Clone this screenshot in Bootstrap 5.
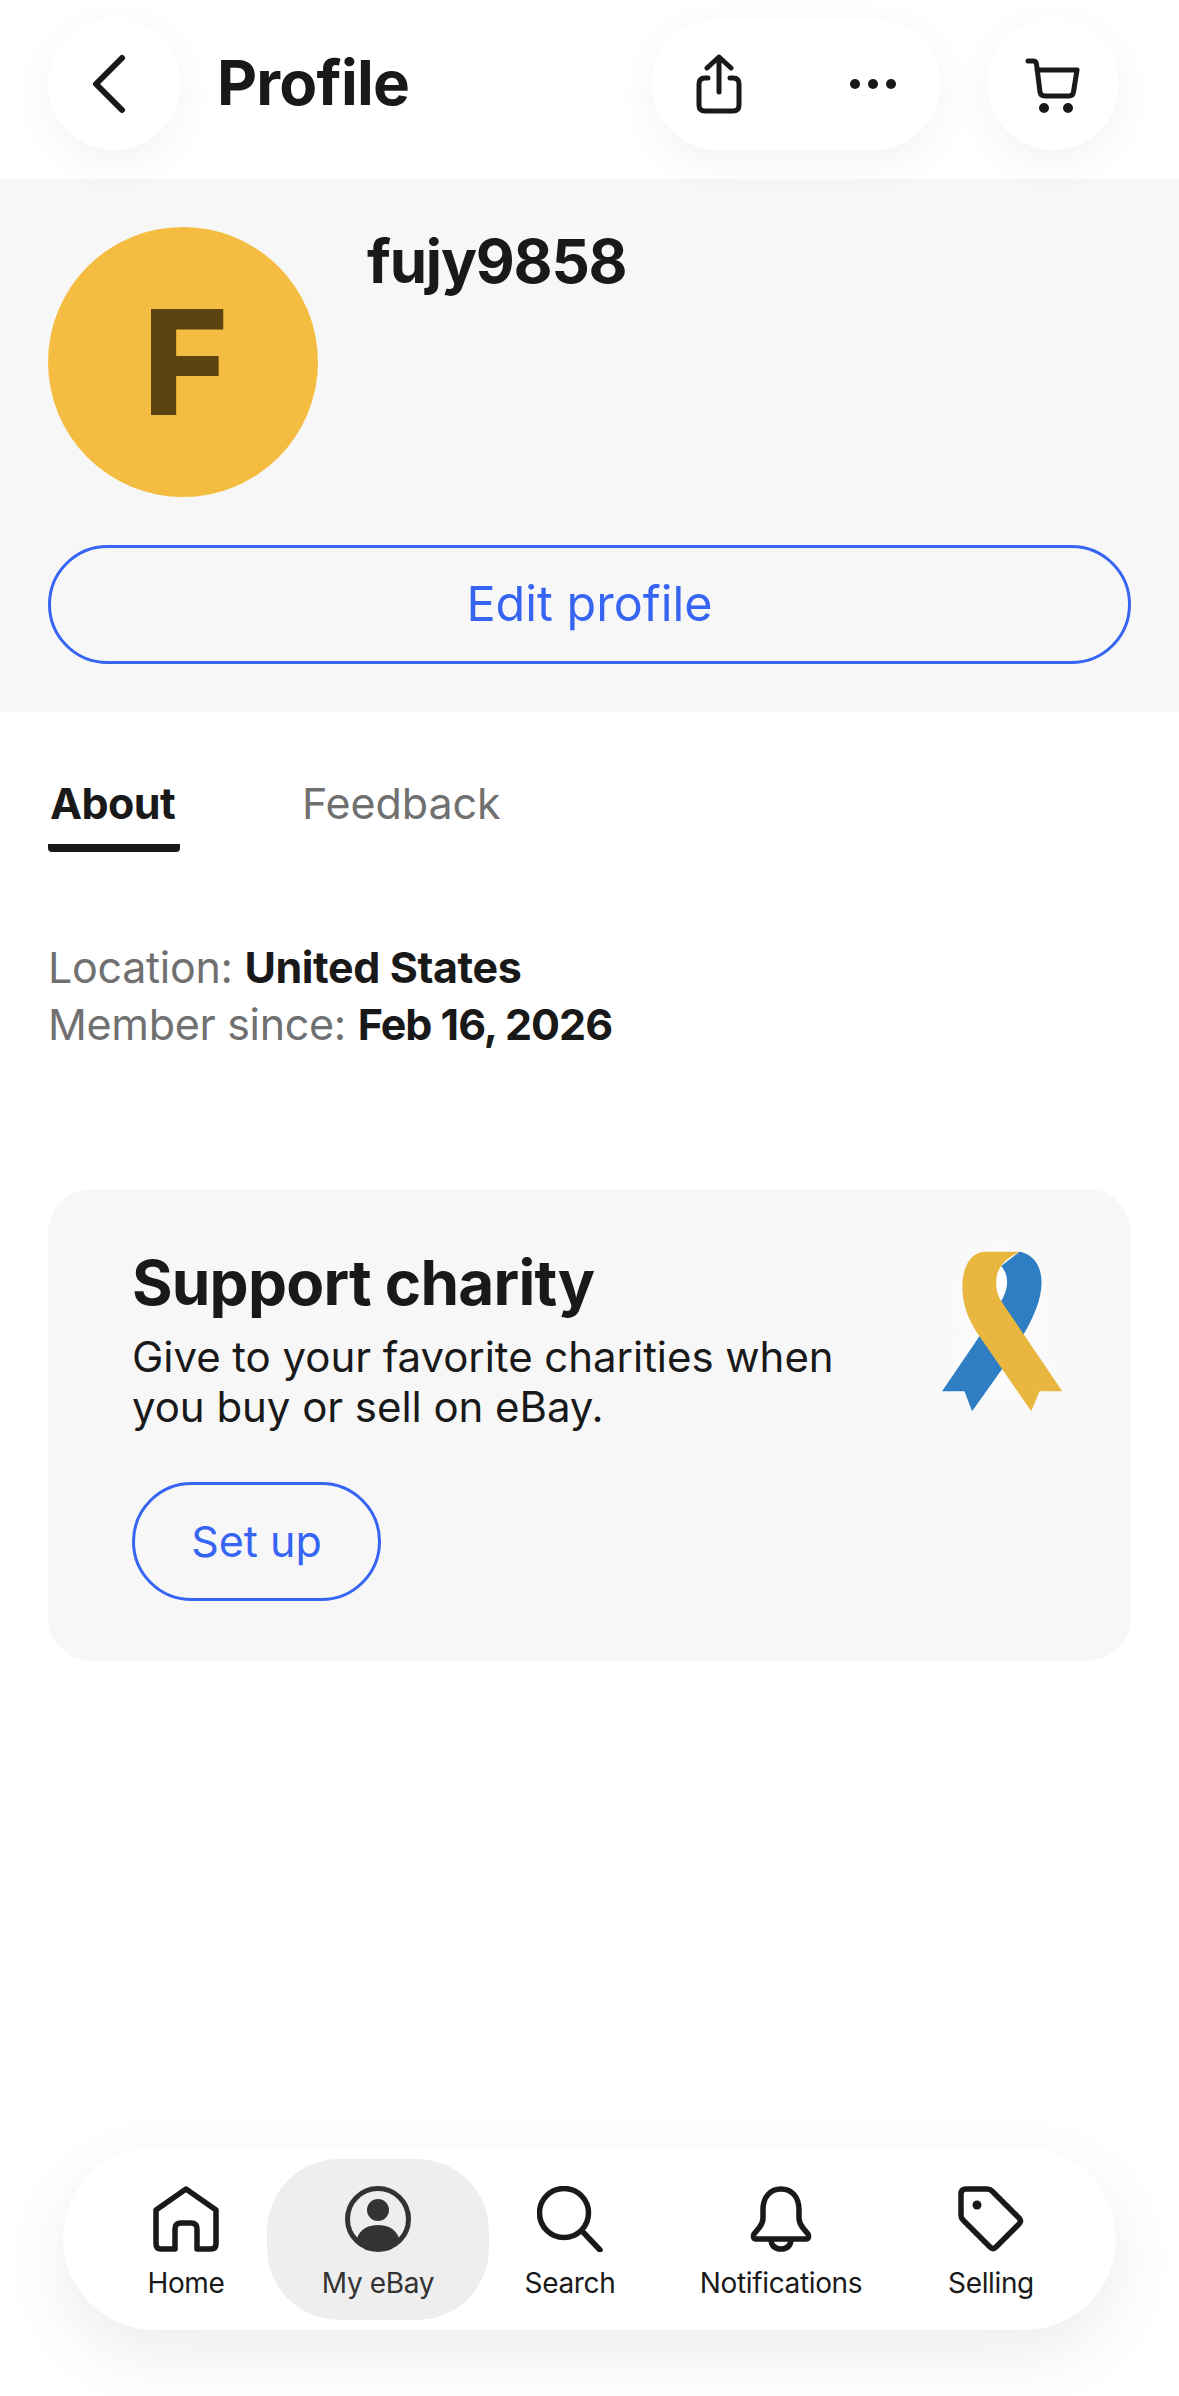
<!DOCTYPE html>
<html lang="en">
<head>
<meta charset="UTF-8">
<meta name="viewport" content="width=device-width, initial-scale=1.0">
<title>Profile</title>
<link rel="stylesheet" href="https://cdn.jsdelivr.net/npm/bootstrap@5.3.0/dist/css/bootstrap.min.css">
<style>
    body { font-family: Inter, "Liberation Sans", sans-serif; color: #191919; background: #fff; min-height: 2396px; width: 1179px; overflow: hidden; }
    .top-bar { height: 179px; padding: 18px 60px 0 48px; }
    .float-btn { height: 132px; width: 132px; background: #fff; border-radius: 66px; box-shadow: 0 12px 44px rgba(0,0,0,.05); }
    .back-btn { padding: 0 10px 0 0; }
    .share-pill { width: 288px; padding: 0 43px 0 44px; }
    .cart-btn { margin-left: 47px; }
    .page-title { font-size: 62px; font-weight: 700; letter-spacing: -.8px; line-height: 72px; margin: 29px 0 0 37px; }
    .profile-head { background: #f7f7f7; height: 533px; padding: 48px 48px 0; }
    .avatar { width: 270px; height: 270px; border-radius: 50%; background: #f4bd41; color: #5c4310; font-size: 146px; font-weight: 800; line-height: 1; padding-left: 5px; }
    .user-name { font-size: 60px; font-weight: 700; letter-spacing: -1.2px; line-height: 72px; margin: -2px 0 0 49px; }
    .pill-btn { border: 3px solid #3665f3; color: #3665f3; background: transparent; border-radius: 60px; height: 119px; font-weight: 400; }
    .pill-btn:hover { color: #3665f3; background: transparent; border-color: #3665f3; }
    .edit-btn { margin-top: 48px; width: 1083px; font-size: 48.5px; }
    .tab-row { padding: 60px 48px 0; gap: 122px; }
    .tab-item { height: 80px; font-size: 43px; line-height: 62px; letter-spacing: -.1px; color: #707070; }
    .tab-on { width: 132px; padding-left: 2px; color: #191919; font-weight: 700; letter-spacing: -.6px; border-bottom: 8px solid #191919; border-radius: 0 0 4px 4px; }
    .info-block { margin-top: 87px; padding-left: 48px; font-size: 43px; line-height: 57px; letter-spacing: -.3px; color: #707070; }
    .info-block b { color: #191919; font-weight: 700; letter-spacing: -.4px; }
    .info-block b.tight-date { letter-spacing: -1px; }
    .charity-card { margin: 136px 48px 0; height: 472px; background: #f7f7f7; border-radius: 44px; padding: 58px 68px 0 84px; }
    .charity-title { font-size: 62px; font-weight: 700; letter-spacing: -.8px; line-height: 72px; margin: 0 0 13px; }
    .charity-text { font-size: 42px; line-height: 50px; letter-spacing: -.05px; margin: 0; }
    .setup-btn { width: 249px; margin-top: 50px; font-size: 43px; }
    .ribbon { margin-top: 4px; filter: drop-shadow(0 0 24px #fff); }
    .bottom-bar { position: absolute; left: 63px; top: 2147px; width: 1053px; height: 183px; background: #fff; border-radius: 92px; padding: 12px 45px 0 42px; box-shadow: 0 24px 70px rgba(0,0,0,.08); }
    .bar-item { height: 161px; padding-top: 27px; font-size: 28px; letter-spacing: -.35px; line-height: 34px; }
    .bar-item svg { margin-bottom: 14px; }
    .w-home, .w-search { width: 162px; }
    .w-ebay { width: 222px; background: #eee; border-radius: 72px; color: #333; }
    .w-notif { width: 260px; }
    .w-sell { width: 160px; }
</style>
</head>
<body>
<header class="top-bar d-flex align-items-start">
    <button class="float-btn back-btn border-0 d-flex align-items-center justify-content-center" aria-label="Back">
        <svg width="40" height="60" viewBox="0 0 40 60" fill="none" stroke="#191919" stroke-width="6" stroke-linecap="round" stroke-linejoin="round"><path d="M33 4 L7 30 L33 56"/></svg>
    </button>
    <h1 class="page-title">Profile</h1>
    <div class="float-btn share-pill ms-auto d-flex align-items-center justify-content-between">
        <svg width="46" height="60" viewBox="0 0 46 60" fill="none" stroke="#191919" stroke-width="5" stroke-linecap="round" stroke-linejoin="round"><path d="M23 38 V3 M11 14 L23 3 L35 14"/><path d="M12 24 H9 Q3 24 3 30 V51 Q3 57 9 57 H37 Q43 57 43 51 V30 Q43 24 37 24 H34"/></svg>
        <svg width="48" height="12" viewBox="0 0 48 12" fill="#191919"><circle cx="6" cy="6" r="5"/><circle cx="24" cy="6" r="5"/><circle cx="42" cy="6" r="5"/></svg>
    </div>
    <button class="float-btn cart-btn border-0 d-flex align-items-center justify-content-center" aria-label="Cart">
        <svg class="mt-1" width="56" height="56" viewBox="0 0 56 56" fill="none" stroke="#191919" stroke-width="5" stroke-linecap="round" stroke-linejoin="round"><path d="M3 3 H8 Q11 3 11.500 6 L15 34 Q15.500 38 20 38 H44 Q48 38 48.500 34 L52 12 H12"/><circle cx="19" cy="50" r="2.500" fill="#191919"/><circle cx="43" cy="50" r="2.500" fill="#191919"/></svg>
    </button>
</header>

<section class="profile-head">
    <div class="d-flex align-items-start">
        <div class="avatar d-flex align-items-center justify-content-center">F</div>
        <h2 class="user-name">fujy9858</h2>
    </div>
    <button class="btn pill-btn edit-btn d-block">Edit profile</button>
</section>

<nav class="tab-row d-flex">
    <div class="tab-item tab-on">About</div>
    <div class="tab-item">Feedback</div>
</nav>

<div class="info-block">
    <div>Location: <b>United States</b></div>
    <div>Member since: <b class="tight-date">Feb 16, 2026</b></div>
</div>

<section class="charity-card d-flex justify-content-between">
    <div>
        <h3 class="charity-title">Support charity</h3>
        <p class="charity-text">Give to your favorite charities when<br>you buy or sell on eBay.</p>
        <button class="btn pill-btn setup-btn">Set up</button>
    </div>
    <svg class="ribbon flex-shrink-0" width="121" height="161" viewBox="188 150 362 482">
        <path fill="#fff" d="M365 190 L392 230 L365 305 L345 250 Z"/>
        <path fill="#2f7ec4" d="M420 152 C465 160 487 200 486 245 C485 300 460 350 435 395 L370 500 L278 630 L255 570 L188 570 L300 405 L365 300 C385 270 392 225 365 195 Z"/>
        <path fill="#e9b640" d="M315 152 H420 C395 165 375 178 365 195 C345 220 345 270 365 300 L548 570 H480 L455 630 L300 405 C275 370 250 320 249 265 C248 200 270 155 315 152 Z"/>
    </svg>
</section>

<nav class="bottom-bar d-flex">
    <div class="bar-item w-home d-flex flex-column align-items-center">
        <svg width="66" height="66" viewBox="0 0 66 66" fill="none" stroke="#191919" stroke-width="5.500" stroke-linejoin="round"><path d="M3 24 L33 3 L63 24 V58 Q63 63 58 63 H44 V43 Q44 37 38 37 H28 Q22 37 22 43 V63 H8 Q3 63 3 58 Z"/></svg>
        <span>Home</span>
    </div>
    <div class="bar-item w-ebay d-flex flex-column align-items-center">
        <svg width="66" height="66" viewBox="0 0 66 66" fill="none"><circle cx="33" cy="33" r="30.500" stroke="#333" stroke-width="5"/><circle cx="33" cy="24" r="11" fill="#333"/><path fill="#333" d="M12 52 C16 42 24 39 33 39 C42 39 50 42 54 52 C48 59 41 63 33 63 C25 63 18 59 12 52 Z"/></svg>
        <span>My eBay</span>
    </div>
    <div class="bar-item w-search d-flex flex-column align-items-center">
        <svg width="66" height="66" viewBox="0 0 66 66" fill="none" stroke="#191919" stroke-width="5.500" stroke-linecap="round"><circle cx="27" cy="27" r="24.500"/><path d="M45 45 L63 64"/></svg>
        <span>Search</span>
    </div>
    <div class="bar-item w-notif d-flex flex-column align-items-center">
        <svg width="62" height="66" viewBox="0 0 62 66" fill="none" stroke="#191919" stroke-width="5.500" stroke-linejoin="round"><path d="M13 24 C13 10 21 3 31 3 C41 3 49 10 49 24 V32 Q49 37 53 42 L58 48 Q60 53 55 53 H7 Q2 53 4 48 L9 42 Q13 37 13 32 Z"/><path d="M21 53 C21 60 25 63 31 63 C37 63 41 60 41 53"/></svg>
        <span>Notifications</span>
    </div>
    <div class="bar-item w-sell d-flex flex-column align-items-center">
        <svg width="66" height="66" viewBox="0 0 66 66" fill="none" stroke="#191919" stroke-width="5.500" stroke-linejoin="round"><path d="M3 8 Q3 3 8 3 H29 Q32 3 34 5 L61 32 Q64 35 61 38 L38 61 Q35 64 32 61 L5 34 Q3 32 3 29 Z"/><circle cx="19" cy="19" r="4.500" fill="#191919" stroke="none"/></svg>
        <span>Selling</span>
    </div>
</nav>

<script src="https://cdn.jsdelivr.net/npm/bootstrap@5.3.0/dist/js/bootstrap.bundle.min.js"></script>
</body>
</html>
